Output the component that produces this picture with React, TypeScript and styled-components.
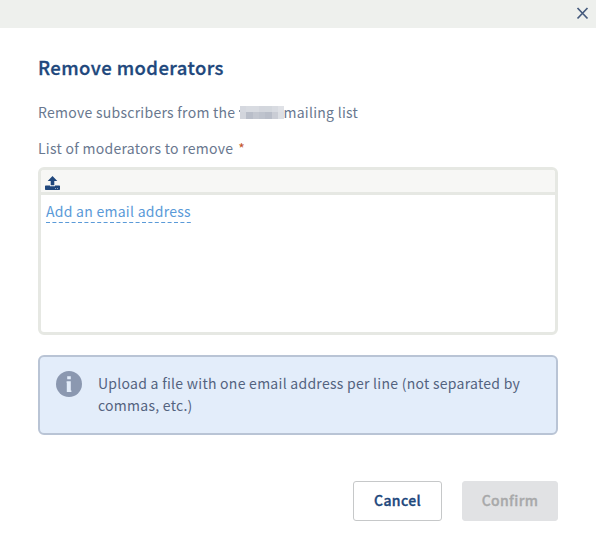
import React from "react";
import styled, { createGlobalStyle } from "styled-components";

const GlobalStyle = createGlobalStyle`
  * { box-sizing: border-box; }
  body {
    margin: 0;
    background: #fff;
    color: #69788f;
    font-family: "Noto Sans CJK SC", "Noto Sans", sans-serif;
    font-size: 14px;
    line-height: 22px;
    letter-spacing: 0.27px;
  }
  button { font: inherit; letter-spacing: inherit; }
`;

const Dialog = styled.main`
  width: 596px;
  height: 548px;
  background: #fff;
  overflow: hidden;
`;

const TopBar = styled.header`
  display: flex;
  justify-content: flex-end;
  height: 28px;
  padding: 7px 7px 0 0;
  background: #eef0ed;
`;

const CloseButton = styled.button`
  display: block;
  width: 13px;
  height: 13px;
  padding: 0;
  border: 0;
  background: none;
  svg { display: block; }
`;

const Content = styled.div`
  padding: 24px 38px 0;
`;

const Title = styled.h1`
  margin: 0;
  color: #20477c;
  font-size: 18.5px;
  font-weight: 500;
  line-height: 30px;
  letter-spacing: 0.42px;
  -webkit-text-stroke: 0.3px currentColor;
`;

const Description = styled.p`
  display: flex;
  align-items: center;
  margin: 19px 0 14px;
  white-space: pre;
`;

const Mosaic = styled.svg`
  display: block;
  width: 45px;
  height: 13px;
  margin: 0 -1px 0 4px;
`;

const Label = styled.label`
  display: flex;
  height: 22px;
`;

const Required = styled.span`
  margin-left: 5px;
  color: #c3552b;
`;

const Editor = styled.section`
  height: 168px;
  margin-top: 8px;
  border: 3px solid #e6e8e3;
  border-radius: 6px;
  overflow: hidden;
`;

const Toolbar = styled.div`
  height: 25px;
  padding: 6px 4px 0;
  border-bottom: 3px solid #e6e8e3;
  background: #f7f7f5;
  svg { display: block; }
`;

const AddLink = styled.a`
  display: block;
  width: 145px;
  height: 22px;
  margin: 5px 0 0 5px;
  color: #5a9ad8;
  white-space: nowrap;
`;

const Dashes = styled.svg`
  display: block;
  width: 100%;
  height: 1px;
`;

const Notice = styled.aside`
  display: flex;
  height: 80px;
  margin-top: 20px;
  padding: 14px 16px;
  border: 2px solid #b9c4d5;
  border-radius: 6px;
  background: #e3edfa;
  color: #53637f;
  svg { flex: none; }
`;

const NoticeText = styled.p`
  margin: 1px 0 0 16px;
  white-space: nowrap;
`;

const Actions = styled.footer`
  display: flex;
  justify-content: flex-end;
  gap: 20px;
  margin-top: 46px;
`;

const Button = styled.button<{ $muted?: boolean }>`
  width: ${({ $muted }) => ($muted ? 96 : 89)}px;
  height: 40px;
  padding: 0 0 2px;
  border: 1px solid ${({ $muted }) => ($muted ? "#e1e2e4" : "#c6c8c9")};
  border-radius: 3px;
  background: ${({ $muted }) => ($muted ? "#e1e2e4" : "#fff")};
  color: ${({ $muted }) => ($muted ? "#a8a9aa" : "#20477c")};
  font-weight: 500;
  letter-spacing: 0.35px;
  -webkit-text-stroke: 0.35px currentColor;
`;

const TILES = [
  ["#d5d8df", "#d8dbe1", "#d8dbe1", "#d3d6dd", "#d3d7dd", "#d8dbe1", "#dfe1e6"],
  ["#d2d5dc", "#b9bec9", "#c3c7d0", "#bec3cd", "#b9bec9", "#cacdd5", "#dcdfe4"],
];

export default function App() {
  return (
    <Dialog>
      <GlobalStyle />
      <TopBar>
        <CloseButton aria-label="Close">
          <svg width="13" height="13" viewBox="0 0 13 13">
            <path d="M1.5 1 11.5 11.5M11.5 1 1.5 11.5" stroke="#465b7d" strokeWidth="1.7" />
          </svg>
        </CloseButton>
      </TopBar>
      <Content>
        <Title>Remove moderators</Title>
        <Description>
          <span>Remove subscribers from the</span>
          <Mosaic viewBox="0 0 45 13" shapeRendering="crispEdges" aria-hidden="true">
            <rect x="0" y="4" width="1" height="2" fill="#8995a8" />
            {TILES.map((row, y) =>
              row.map((fill, x) => (
                <rect key={`${x}-${y}`} x={1 + x * 6.3} y={y ? 6 : 0} width="7" height="7" fill={fill} />
              ))
            )}
          </Mosaic>
          <span>mailing list</span>
        </Description>
        <Label>
          <span>List of moderators to remove</span>
          <Required>*</Required>
        </Label>
        <Editor>
          <Toolbar>
            <svg width="15" height="14" viewBox="0 0 15 14" fill="#20477c">
              <path d="M7.5 0 12.3 5H9.3V9.2H5.7V5H2.7Z" />
              <path fillRule="evenodd" d="M.7 9.5H5V10.3H10V9.5H14.3Q15 9.5 15 10.2V13.3Q15 14 14.3 14H.7Q0 14 0 13.3V10.2Q0 9.5.7 9.5ZM10.3 12.1V12.7H11V12.1ZM12.3 12.1V12.7H13V12.1Z" />
            </svg>
          </Toolbar>
          <AddLink>
            Add an email address
            <Dashes>
              <line x1="0" y1=".5" x2="100%" y2=".5" stroke="#5a9ad8" strokeDasharray="4 2.4" />
            </Dashes>
          </AddLink>
        </Editor>
        <Notice>
          <svg width="26" height="26" viewBox="0 0 26 26">
            <circle cx="13" cy="13" r="13" fill="#8b98b0" />
            <path d="M11.2 5.3H14.8V8.3H11.2ZM10.6 10.3H14.8V19.4H15.4V21H10.8V12H10.6Z" fill="#e3edfa" />
          </svg>
          <NoticeText>
            Upload a file with one email address per line (not separated by
            <br />
            commas, etc.)
          </NoticeText>
        </Notice>
        <Actions>
          <Button>Cancel</Button>
          <Button $muted disabled>Confirm</Button>
        </Actions>
      </Content>
    </Dialog>
  );
}
